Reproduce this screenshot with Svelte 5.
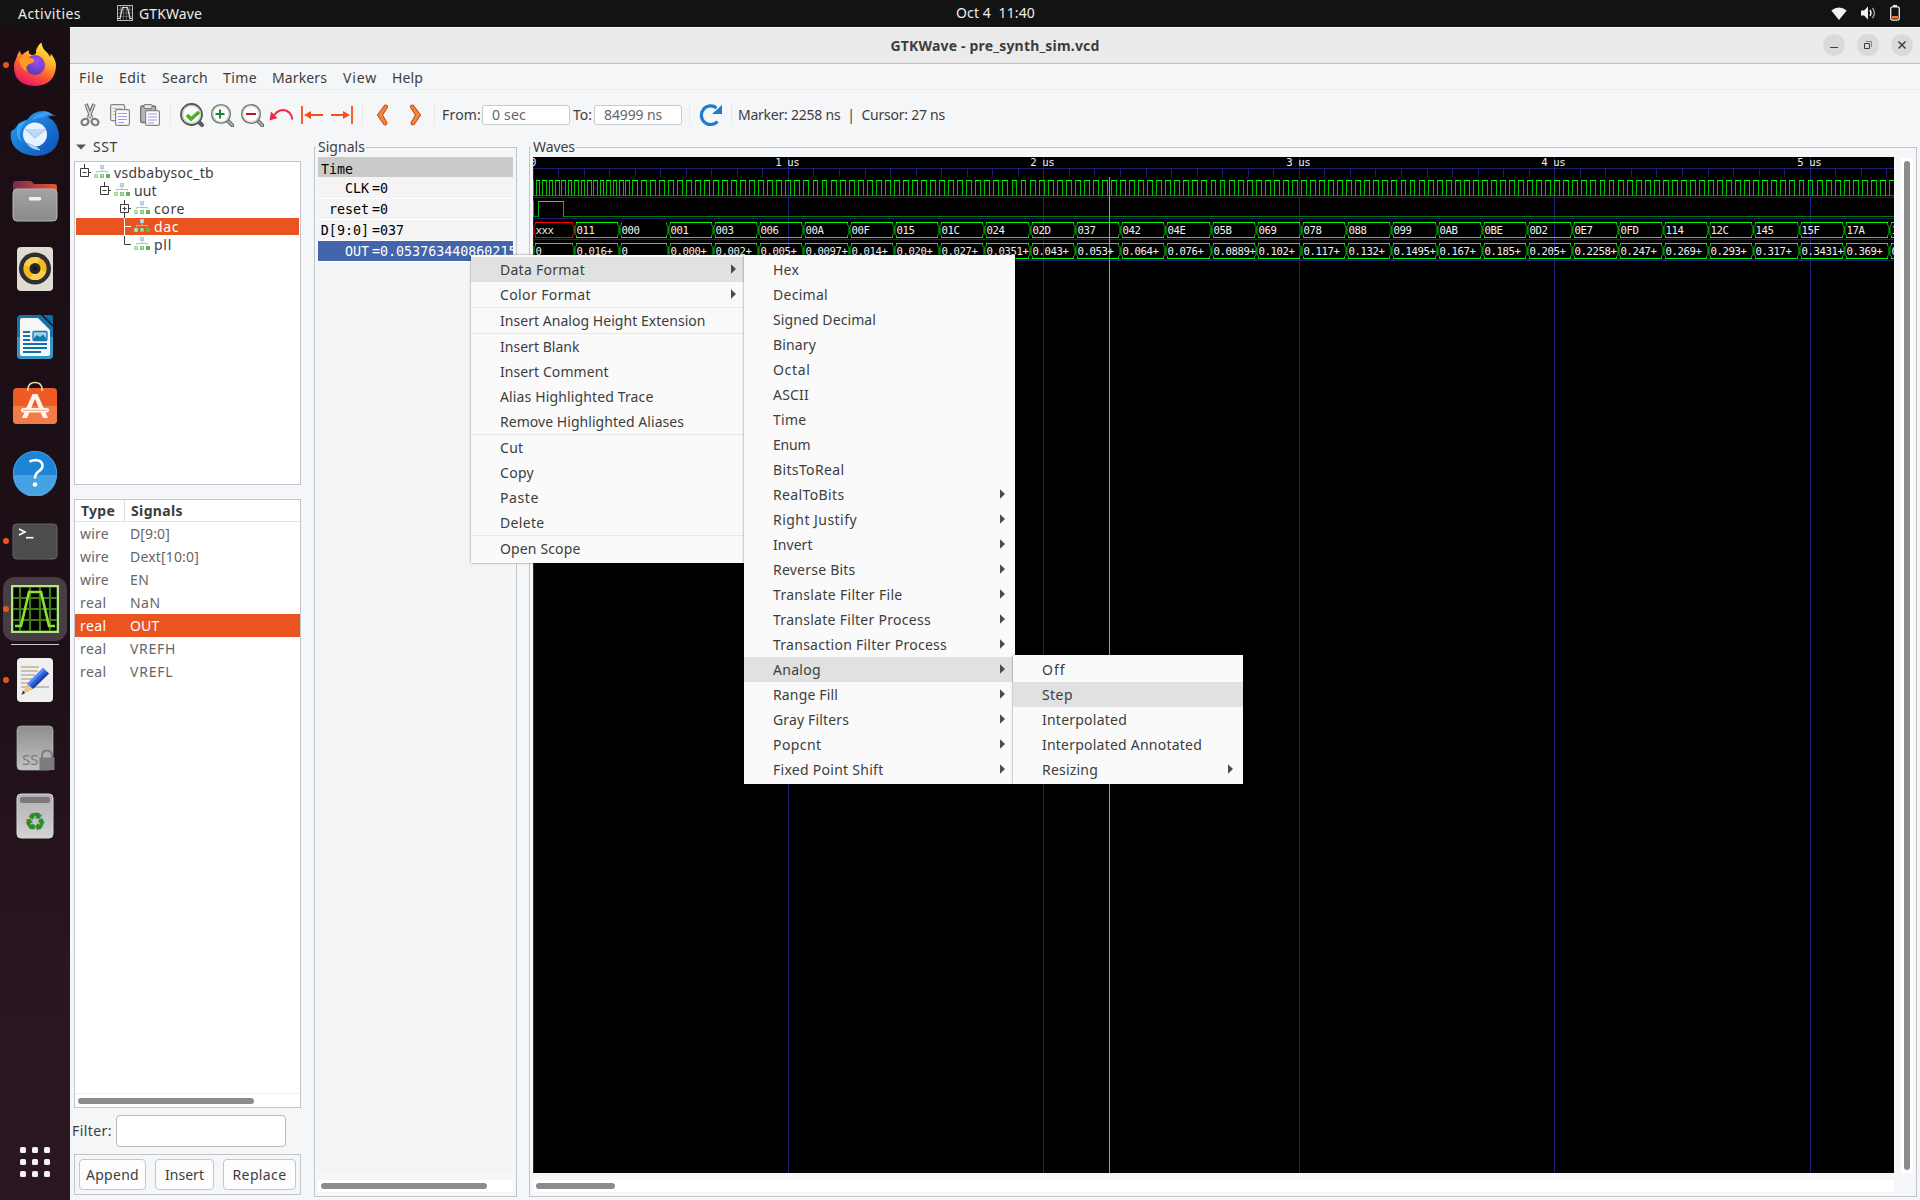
<script>
  // Spreads or tightens the tracking of a label so that it takes the given width.
  function fit(node, width) {
    if (!width) return;
    const n = node.textContent.length;
    const w = node.getBoundingClientRect().width;
    node.style.letterSpacing = `${(width - w) / n}px`;
  }

  const mainMenu = [['File', 25, 40], ['Edit', 27, 43], ['Search', 46, 61], ['Time', 34, 49], ['Markers', 55, 71], ['View', 34, 49], ['Help', 31, 50]];

  const contextMenu = [
    { t: 'Data Format', w: 85, sub: true, on: true }, { t: 'Color Format', w: 91, sub: true }, null,
    { t: 'Insert Analog Height Extension', w: 205.5 }, null,
    { t: 'Insert Blank', w: 79.5 }, { t: 'Insert Comment', w: 108.5 }, { t: 'Alias Highlighted Trace', w: 153.5 }, { t: 'Remove Highlighted Aliases', w: 184 }, null,
    { t: 'Cut', w: 23.5 }, { t: 'Copy', w: 34 }, { t: 'Paste', w: 39 }, { t: 'Delete', w: 44.5 }, null,
    { t: 'Open Scope', w: 80.5 }
  ];
  const formatMenu = [
    { t: 'Hex', w: 26 }, { t: 'Decimal', w: 55 }, { t: 'Signed Decimal', w: 103 }, { t: 'Binary', w: 43 }, { t: 'Octal', w: 37.5 },
    { t: 'ASCII', w: 36 }, { t: 'Time', w: 33.5 }, { t: 'Enum', w: 37.5 }, { t: 'BitsToReal', w: 71.5 },
    { t: 'RealToBits', w: 71.5, sub: true }, { t: 'Right Justify', w: 84, sub: true }, { t: 'Invert', w: 39.5, sub: true },
    { t: 'Reverse Bits', w: 82.5, sub: true }, { t: 'Translate Filter File', w: 129.5, sub: true }, { t: 'Translate Filter Process', w: 158, sub: true },
    { t: 'Transaction Filter Process', w: 174, sub: true }, { t: 'Analog', w: 48, sub: true, on: true }, { t: 'Range Fill', w: 65, sub: true },
    { t: 'Gray Filters', w: 76, sub: true }, { t: 'Popcnt', w: 48.5, sub: true }, { t: 'Fixed Point Shift', w: 110.5, sub: true }
  ];
  const analogMenu = [
    { t: 'Off', w: 23.5 }, { t: 'Step', w: 31, on: true }, { t: 'Interpolated', w: 85 }, { t: 'Interpolated Annotated', w: 160 }, { t: 'Resizing', w: 56, sub: true }
  ];

  const tree = [
    { name: 'vsdbabysoc_tb', depth: 0, box: '-', w: 100 },
    { name: 'uut', depth: 1, box: '-', w: 22.5 },
    { name: 'core', depth: 2, box: '+', w: 31 },
    { name: 'dac', depth: 2, on: true, w: 25 },
    { name: 'pll', depth: 2, last: true, w: 18 }
  ];
  const signals = [['wire', 'D[9:0]', 40], ['wire', 'Dext[10:0]', 69], ['wire', 'EN', 19.5], ['real', 'NaN', 30.5], ['real', 'OUT', 29.5, true], ['real', 'VREFH', 46], ['real', 'VREFL', 43.5]];
  const traces = [['CLK', '0'], ['reset', '0'], ['D[9:0]', '037'], ['OUT', '0.053763440860215', true]];

  // Waveform geometry, in canvas pixels.
  const W = 1361, H = 1016;
  const US = 255.45;
  const snap = (v) => Math.round(v - 0.5) + 0.5;
  const grid = (v) => Math.floor(v) + 0.5;
  const majors = [0, 1, 2, 3, 4, 5].map((i) => grid(i * US));
  const ticks = Array.from({ length: 54 }, (_, i) => grid((i * US) / 10));

  const pulses = [];
  for (let i = 0; i < 15; i++) pulses.push([snap(3.2 + i * 6.4), snap(3.2 + i * 6.4 + 3.6)]);
  for (let i = 0; i < 140; i++) pulses.push([snap(99.1 + i * 9.046), snap(99.1 + i * 9.046 + 4.9)]);
  const clkEdges = 'M0.5 23.5V39' + pulses.map(([a, b]) => `M${a} 39V23.5M${b} 23.5V39`).join('');
  const clkHigh = pulses.map(([a, b]) => `M${a - 0.5} 23.5H${b + 0.5}`).join('');

  const dVals = 'xxx 011 000 001 003 006 00A 00F 015 01C 024 02D 037 042 04E 05B 069 078 088 099 0AB 0BE 0D2 0E7 0FD 114 12C 145 15F 17A 196'.split(' ');
  const oVals = '0 0.016+ 0 0.000+ 0.002+ 0.005+ 0.0097+ 0.014+ 0.020+ 0.027+ 0.0351+ 0.043+ 0.053+ 0.064+ 0.076+ 0.0889+ 0.102+ 0.117+ 0.132+ 0.1495+ 0.167+ 0.185+ 0.205+ 0.2258+ 0.247+ 0.269+ 0.293+ 0.317+ 0.3431+ 0.369+ 0.397+'.split(' ');
  const bounds = [0.5, 41.3, 86.3];
  for (let i = 0; i < 29; i++) bounds.push(135.3 + i * 45.23);
  const cell = (i, top, openTop) => {
    const a = snap(bounds[i]), b = snap(bounds[i + 1]), bot = top + 15;
    const ends = `M${a + 2} ${top}V${top + 2}L${a + 0.5} ${top + 4}V${bot - 4}L${a + 2} ${bot - 2}V${bot}M${b - 2} ${top}V${top + 2}L${b - 0.5} ${top + 4}V${bot - 4}L${b - 2} ${bot - 2}V${bot}`;
    return { ends, lines: `${openTop ? '' : `M${a + 1.5} ${top}H${b - 1.5}`}M${a + 1.5} ${bot}H${b - 1.5}`, x: a + 2 };
  };
  const dCells = dVals.map((v, i) => ({ v, bad: v === 'xxx', ...cell(i, 65.5, v === '000') }));
  const oCells = oVals.map((v, i) => ({ v, ...cell(i, 86.5, false) }));
</script>

{#snippet menu(items)}
  {#each items as it}
    {#if it}
      <div class="item" class:on={it.on}>
        <span use:fit={it.w}>{it.t}</span>
        {#if it.sub}<svg class="arrow" width="5" height="10" viewBox="0 0 5 10"><path d="M0 0.3L5 5L0 9.7Z" fill="#4c4c4c" /></svg>{/if}
      </div>
    {:else}
      <div class="rule"></div>
    {/if}
  {/each}
{/snippet}

{#snippet lens()}
  <path d="M17 17L23 23" stroke="#6d6f6b" stroke-width="4" stroke-linecap="round" />
  <path d="M17.5 17.5L22.5 22.5" stroke="#b9bbb6" stroke-width="1.5" stroke-linecap="round" />
  <circle cx="11" cy="11" r="9.3" fill="#fcfcfa" stroke="#777974" stroke-width="1.6" />
  <circle cx="11" cy="11" r="7.9" fill="none" stroke="#d8dad4" stroke-width="1.2" />
{/snippet}

<div class="desktop">
  <header class="topbar">
    <span class="act"><span use:fit={63}>Activities</span></span>
    <svg class="appicon" width="16" height="16" viewBox="0 0 16 16">
      <rect x="0.5" y="0.5" width="15" height="15" fill="#1a1a1a" stroke="#b8b8b8" />
      <path d="M3.5 1V15M6.5 1V15M9.5 1V15M12.5 1V15M1 4.5H15M1 8H15M1 11.5H15" stroke="#666" stroke-width="0.8" />
      <path d="M1 13.5H3L5.5 2.5H10.5L13 13.5H15" fill="none" stroke="#ddd" stroke-width="1.2" />
    </svg>
    <span use:fit={63}>GTKWave</span>
    <span class="clock"><span use:fit={79}>Oct 4&nbsp; 11:40</span></span>
    <div class="tray">
      <svg width="16" height="13" viewBox="0 0 16 13"><path d="M8 13L0.3 3.6Q8 -2.8 15.7 3.6Z" fill="#f2f2f2" /></svg>
      <svg width="15" height="14" viewBox="0 0 15 14"><path d="M0 4.5H3L7 0.5V13.5L3 9.5H0Z" fill="#f2f2f2" /><path d="M9 4Q11 7 9 10" fill="none" stroke="#eee" stroke-width="1.4" /><path d="M11.5 1.8Q15.2 7 11.5 12.2" fill="none" stroke="#aaa" stroke-width="1.3" /></svg>
      <svg width="10" height="16" viewBox="0 0 10 16"><path d="M3 0H7V2H3Z" fill="#eee" /><rect x="0.7" y="1.9" width="8.6" height="13.2" rx="1.8" fill="none" stroke="#eee" stroke-width="1.3" /><rect x="2" y="11" width="6" height="2.6" fill="#f37329" /></svg>
    </div>
  </header>

  <div class="under">
    <nav class="dock">
      <div class="slot run">
        <svg width="48" height="48" viewBox="0 0 48 48">
          <defs>
            <linearGradient id="ff" x1="0.8" y1="0" x2="0.3" y2="1"><stop offset="0" stop-color="#fff04a" /><stop offset="0.35" stop-color="#ffb52a" /><stop offset="0.65" stop-color="#ff5a36" /><stop offset="1" stop-color="#e8126a" /></linearGradient>
            <radialGradient id="ffc" cx="0.6" cy="0.3" r="0.8"><stop offset="0" stop-color="#a04df0" /><stop offset="1" stop-color="#4e3bb0" /></radialGradient>
          </defs>
          <path d="M5 18Q6 13 9 9.500Q9 13 11 14Q15 10 18 9.500Q17 13 21 14Q26 14 25 10Q26 5 30.500 1.500Q31 7 35 10.500Q38 13 39 16Q40 14 39.500 12.500Q45 18 45 25Q44 44 24 45Q3 44 3 26Q3 21 5 18Z" fill="url(#ff)" />
          <circle cx="24" cy="24" r="10" fill="url(#ffc)" />
          <path d="M8 18Q14 14 23 18Q24 22 18 23Q13 26 17 31Q9 28 8 18Z" fill="#ff9a25" />
        </svg>
      </div>
      <div class="slot">
        <svg width="50" height="48" viewBox="0 0 50 48">
          <defs><linearGradient id="tb" x1="0" y1="0" x2="1" y2="1"><stop offset="0" stop-color="#2aa0f2" /><stop offset="1" stop-color="#0b4fb4" /></linearGradient></defs>
          <path d="M2 21Q4 22 6 18Q10 12 17 11Q23 1 36 2L46 7Q41 6 38 8Q49 14 49 28Q47 46 26 47Q4 45 1 30Q0 24 2 21Z" fill="url(#tb)" />
          <path d="M21 11Q27 2 38 3L43 6Q37 5 34 8Z" fill="#3f9bf0" />
          <path d="M8 15Q4 27 12 34Q6 22 17 11Z" fill="#3aa6f5" />
          <circle cx="25" cy="25.500" r="12" fill="#e6f2fd" />
          <path d="M15 20L25 29L36 20M24 37Q27 38 30 41Q20 40 17 34Z" fill="#b9dafa" stroke="#98bfea" />
        </svg>
      </div>
      <div class="slot">
        <svg width="46" height="42" viewBox="0 0 46 42">
          <defs><linearGradient id="fl" x1="0" x2="1"><stop offset="0" stop-color="#7c2b52" /><stop offset="1" stop-color="#e8562a" /></linearGradient><linearGradient id="fg" x1="0" y1="0" x2="0" y2="1"><stop offset="0" stop-color="#a3a3a3" /><stop offset="1" stop-color="#8a8a8a" /></linearGradient></defs>
          <path d="M1 4Q1 1 4 1H18Q20 1 22 4H42Q45 4 45 7V20H1Z" fill="url(#fl)" />
          <rect x="1" y="9" width="44" height="32" rx="4" fill="url(#fg)" stroke="#b6b6b6" />
          <rect x="17" y="17" width="12" height="3.500" rx="1" fill="#f3f3f3" />
        </svg>
      </div>
      <div class="slot">
        <svg width="38" height="46" viewBox="0 0 38 46">
          <rect x="1" y="1" width="36" height="44" rx="4" fill="#dfdcd2" /><circle cx="19" cy="22.500" r="16" fill="#2f2e36" /><circle cx="19" cy="22.500" r="11.600" fill="#f2b91f" /><path d="M8 19A11.600 11.600 0 0 1 24 12L19 22ZM30 26A11.600 11.600 0 0 1 14 33L19 22Z" fill="#fbd65b" opacity="0.8" /><circle cx="19" cy="22.500" r="5.500" fill="#28272e" /><circle cx="19" cy="22.500" r="2" fill="#111" />
        </svg>
      </div>
      <div class="slot">
        <svg width="38" height="46" viewBox="0 0 38 46">
          <path d="M5 1H25L37 13V41Q37 45 33 45H5Q1 45 1 41V5Q1 1 5 1Z" fill="#1174aa" /><path d="M1 23H37V41Q37 45 33 45H5Q1 45 1 41Z" fill="#3796c8" /><path d="M27 1H35Q37 1 37 3V11Z" fill="#0f6ba0" />
          <path d="M6 4H22L34 16V40Q34 42 32 42H6Q4 42 4 40V6Q4 4 6 4Z" fill="#f6f6f6" />
          <path d="M7 18H14M7 22H14M7 26H14M7 30H31M7 34H31M7 38H25" stroke="#0d72ad" stroke-width="1.800" /><rect x="17" y="17.500" width="14" height="9" rx="1" fill="#a6d1ea" stroke="#1579b1" stroke-width="1.300" /><path d="M18 26V24L21 21L24 23L27 20.500L30 24V26Z" fill="#1579b1" />
        </svg>
      </div>
      <div class="slot bag">
        <svg width="46" height="48" viewBox="0 0 46 48">
          <rect x="1" y="9" width="44" height="36" rx="4" fill="#ef5b25" /><path d="M1 27H45V41Q45 45 41 45H5Q1 45 1 41Z" fill="#f27c47" />
          <path d="M16 12V9Q17 3.500 23 3.500Q29 3.500 30 9V12" fill="none" stroke="#f5d9a8" stroke-width="1.600" />
          <path d="M20.500 15H25.500L36 39H31L23 20L15 39H10Z" fill="#fff3ea" /><rect x="9" y="29" width="28" height="4.500" rx="2.200" fill="#fff3ea" /><path d="M11 31.300H35" stroke="#f08a60" stroke-width="0.700" />
        </svg>
      </div>
      <div class="slot">
        <svg width="46" height="46" viewBox="0 0 46 46">
          <circle cx="23" cy="23" r="22" fill="#1d84d8" /><path d="M1 25H45A22 22 0 0 1 1 25Z" fill="#45a2e2" /><circle cx="23" cy="23" r="21.700" fill="none" stroke="#5ea9e0" stroke-width="0.700" />
          <path d="M17.500 11.500Q21 10 24 10Q30.500 10.500 30.500 16Q30.500 19 26.500 21.500Q23 24 23 28.500" fill="none" stroke="#fff" stroke-width="2.600" /><circle cx="23" cy="34.500" r="2.300" fill="#fff" />
        </svg>
      </div>
      <div class="slot run term">
        <svg width="46" height="38" viewBox="0 0 46 38">
          <rect x="1" y="1" width="44" height="35" rx="3.500" fill="#4c4c4c" stroke="#656565" /><path d="M7 6L13 9L7 12" fill="none" stroke="#fff" stroke-width="1.600" /><path d="M14 14.700H21.500" stroke="#fff" stroke-width="1.600" />
        </svg>
      </div>
      <div class="slot run active">
        <svg width="48" height="48" viewBox="0 0 48 48">
          <rect x="1" y="1" width="46" height="46" fill="#000" stroke="#aee87f" stroke-width="2.600" />
          <path d="M9 2V46M19 2V46M29 2V46M39 2V46M2 13H46M2 24H46M2 35H46" stroke="#417a1b" stroke-width="2.200" />
          <path d="M4 41H10L18 7H30L38 41H44" fill="none" stroke="#8ae234" stroke-width="2.600" />
        </svg>
      </div>
      <div class="dockrule"></div>
      <div class="slot run">
        <svg width="38" height="46" viewBox="0 0 38 46">
          <rect x="1" y="1" width="36" height="44" rx="4" fill="#efefed" />
          <path d="M5 10H23M5 14H22M5 18H19M5 22H18M5 26H15M5 30H33" stroke="#c5c2b4" stroke-width="1.800" />
          <path d="M27 11L33 16.500L17 32L11 27Z" fill="#2b60dc" /><path d="M27 11L29 13L13 28.500L11 27Z" fill="#5a8cf2" /><path d="M31 15L33 16.500L17 32L15 30.500Z" fill="#1f45ad" /><path d="M11 27L17 32L5.500 38Z" fill="#f4bf86" /><path d="M7 33.500L9 36L5.500 38Z" fill="#333" />
        </svg>
      </div>
      <div class="slot">
        <svg width="40" height="46" viewBox="0 0 40 46">
          <defs><linearGradient id="sd" x1="0" y1="0" x2="0" y2="1"><stop offset="0" stop-color="#8f8f8f" /><stop offset="1" stop-color="#c3c3c3" /></linearGradient></defs>
          <rect x="2" y="1" width="36" height="44" rx="4" fill="url(#sd)" stroke="#b4b4b4" stroke-width="0.700" />
          <text x="7" y="39.500" class="ssd">SS</text>
          <path d="M27 33V30Q27.500 25.500 32 25.500Q36.500 25.500 37 30V33" fill="none" stroke="#7c7c7c" stroke-width="2" /><rect x="24.500" y="32.500" width="15" height="12.500" fill="#7c7c7c" />
        </svg>
      </div>
      <div class="slot">
        <svg width="38" height="46" viewBox="0 0 38 46">
          <defs><linearGradient id="tr" x1="0" y1="0" x2="0" y2="1"><stop offset="0" stop-color="#b2b2b2" /><stop offset="1" stop-color="#d2d2d2" /></linearGradient></defs>
          <rect x="1" y="1" width="36" height="44" rx="4" fill="url(#tr)" stroke="#d8d8d8" /><rect x="4" y="4" width="30" height="6" rx="2" fill="#7a7a7a" />
          <text x="19" y="37" text-anchor="middle" class="recycle">♻</text>
        </svg>
      </div>
      <div class="grid9">{#each Array(9) as _}<i></i>{/each}</div>
    </nav>

    <main class="window">
      <div class="titlebar">
        <b use:fit={209}>GTKWave - pre_synth_sim.vcd</b>
        <div class="winbtns">
          <svg width="22" height="22" viewBox="0 0 22 22"><circle cx="11" cy="11" r="11" fill="#dadada" /><path d="M7 13.500H15" stroke="#3d3d3d" /></svg>
          <svg width="22" height="22" viewBox="0 0 22 22"><circle cx="11" cy="11" r="11" fill="#dadada" /><path d="M7.500 9.500H12.500V14.500H7.500Z" fill="none" stroke="#3d3d3d" /><path d="M9 7.500H14.500V13" fill="none" stroke="#888" /></svg>
          <svg width="22" height="22" viewBox="0 0 22 22"><circle cx="11" cy="11" r="11" fill="#dadada" /><path d="M7.500 7.500L14.500 14.500M14.500 7.500L7.500 14.500" stroke="#3d3d3d" stroke-width="1.500" /></svg>
        </div>
      </div>

      <div class="menubar">
        {#each mainMenu as [label, w, step]}<span style:width="{step}px"><span use:fit={w}>{label}</span></span>{/each}
      </div>

      <div class="toolbar">
        <svg class="cut" width="20" height="24" viewBox="0 0 20 24">
          <path d="M6 1L11.500 15M14 1L8.500 15" stroke="#747671" stroke-width="3.600" /><path d="M6 1.500L11.500 15M14 1.500L8.500 15" stroke="#d3d5d0" stroke-width="1.400" />
          <ellipse cx="5" cy="19" rx="3.600" ry="3" fill="#f5f6f8" stroke="#7b7d78" stroke-width="2.200" transform="rotate(-30 5 19)" /><ellipse cx="15" cy="19" rx="3.600" ry="3" fill="#f5f6f8" stroke="#7b7d78" stroke-width="2.200" transform="rotate(30 15 19)" />
        </svg>
        <svg class="copy" width="20" height="22" viewBox="0 0 20 22">
          <rect x="0.600" y="0.600" width="14" height="16" rx="1.500" fill="#f1f1ef" stroke="#858782" stroke-width="1.200" /><path d="M3 4.500H12M3 7.500H6M3 10.500H6" stroke="#bbb" />
          <rect x="5.600" y="5.600" width="13.800" height="15.800" rx="1.500" fill="#fcfcfb" stroke="#858782" stroke-width="1.200" /><path d="M8 9.500H17M8 12.500H17M8 15.500H17M8 18.500H14" stroke="#9c9cee" />
        </svg>
        <svg class="paste" width="20" height="22" viewBox="0 0 20 22">
          <rect x="0.600" y="2" width="15" height="16.500" rx="1.500" fill="#b5b7b2" stroke="#70726d" stroke-width="1.300" /><rect x="4" y="0.600" width="8" height="4" rx="1" fill="#e8e8e6" stroke="#70726d" />
          <rect x="5.600" y="6.600" width="13.800" height="14.800" rx="1.500" fill="#fcfcfb" stroke="#858782" stroke-width="1.200" /><path d="M8 10H17M8 13H17M8 16H17M8 19H14" stroke="#9c9cee" />
        </svg>
        <i class="sep s1"></i>
        <svg class="z1" width="24" height="24" viewBox="0 0 24 24"><path d="M18 18L22 22" stroke="#5c5e5a" stroke-width="4" stroke-linecap="round" /><circle cx="11.500" cy="11.500" r="10.500" fill="#fbfbf9" stroke="#555753" stroke-width="1.800" /><circle cx="11.500" cy="11.500" r="8.900" fill="none" stroke="#c9cbc5" stroke-width="1.300" /><path d="M7 12L11 16L19 9" fill="none" stroke="#4caf22" stroke-width="3.600" /></svg>
        <svg class="z2" width="24" height="24" viewBox="0 0 24 24">{@render lens()}<path d="M5.500 11H14.500M10 6.500V15.500" stroke="#148a2b" stroke-width="2" /></svg>
        <svg class="z3" width="24" height="24" viewBox="0 0 24 24">{@render lens()}<path d="M6 11H16" stroke="#c0142c" stroke-width="2" /></svg>
        <svg class="undo" width="25" height="14" viewBox="0 0 25 14"><path d="M4 9Q8 2 14 2Q22 2.500 23.500 11.500" fill="none" stroke="#f5274d" stroke-width="1.900" /><path d="M0.500 12.500L2 3.500L8.500 10Z" fill="#f5274d" /></svg>
        <svg class="toleft" width="22" height="18" viewBox="0 0 22 18"><path d="M1 0V18M22 9H6" stroke="#f4511a" stroke-width="1.800" /><path d="M3 9L10 5V13Z" fill="#f4511a" /></svg>
        <svg class="toright" width="22" height="18" viewBox="0 0 22 18"><path d="M21 0V18M0 9H16" stroke="#f4511a" stroke-width="1.800" /><path d="M19 9L12 5V13Z" fill="#f4511a" /></svg>
        <i class="sep s2"></i>
        <svg class="prev" width="13" height="22" viewBox="0 0 13 22"><path d="M9 1L1.500 11L8 20.500Q10 21.500 11 19L6.500 11L11.500 3Q11.500 1 9 1Z" fill="#f08a3c" stroke="#d2501c" stroke-width="1.200" /></svg>
        <svg class="next" width="13" height="22" viewBox="0 0 13 22"><path d="M4 1L11.500 11L5 20.500Q3 21.500 2 19L6.500 11L1.500 3Q1.500 1 4 1Z" fill="#f08a3c" stroke="#d2501c" stroke-width="1.200" /></svg>
        <i class="sep s3"></i>
        <span class="from"><span use:fit={39}>From:</span></span>
        <div class="entry"><span use:fit={34}>0 sec</span></div>
        <span class="to"><span use:fit={19}>To:</span></span>
        <div class="entry"><span use:fit={58}>84999 ns</span></div>
        <i class="sep s4"></i>
        <svg class="reload" width="24" height="24" viewBox="0 0 24 24"><path d="M18.500 18.500A9.300 9.300 0 1 1 17.500 5" fill="none" stroke="#1f7bd2" stroke-width="3.200" /><path d="M23 2V11H13Z" fill="#1f7bd2" /></svg>
        <i class="sep s5"></i>
        <span use:fit={207}>Marker: 2258 ns&nbsp; |&nbsp; Cursor: 27 ns</span>
      </div>

      <div class="body">
        <section class="side">
          <div class="sst"><svg width="10" height="6" viewBox="0 0 10 6"><path d="M0 0.500H10L5 5.500Z" fill="#555" /></svg><span use:fit={25}>SST</span></div>
          <div class="tree">
            {#each tree as r}
              <div class="node" class:on={r.on} style:padding-left="{4 + r.depth * 20}px">
                <svg width="14" height="18" viewBox="0 0 14 18">
                  {#if r.box}
                    <path d="M4.500 0V4.500M8.500 8.500H11M0.500 4.500H8.500V12.500H0.500ZM2.500 8.500H6.500" fill="none" stroke="#3a3a3a" />
                    {#if r.box === '+'}<path d="M4.500 6.500V10.500M4.500 12.500V18" stroke="#3a3a3a" />{/if}
                  {:else}
                    <path d={r.last ? 'M4.5 0V8.5H11' : 'M4.5 0V18M4.5 8.5H11'} fill="none" stroke={r.on ? '#fff' : '#3a3a3a'} />
                  {/if}
                </svg>
                <svg class="hier" width="16" height="14" viewBox="0 0 16 14">
                  <path d="M8 5V7.500M2.500 9V7.500H13.500V9" fill="none" stroke="#babcb8" />
                  <rect x="6" y="1" width="4" height="4" fill="#a9cbee" />
                  <rect x="0" y="10" width="4" height="4" fill="#a5d69a" /><rect x="6" y="10" width="4" height="4" fill="#83c776" /><rect x="12" y="10" width="4" height="4" fill="#5fb353" />
                  <path d="M7 2H9V3.500H7ZM1 11H3V12.500H1ZM7 11H9V12.500H7Z" fill="#d9ecf5" opacity="0.7" />
                </svg>
                <span use:fit={r.w}>{r.name}</span>
              </div>
            {/each}
          </div>
          <div class="list">
            <div class="lhead"><b class="c1"><span use:fit={34}>Type</span></b><b class="c2"><span use:fit={52}>Signals</span></b></div>
            {#each signals as [type, name, w, on]}
              <div class="lrow" class:on={on}><span class="c1"><span use:fit={type === 'wire' ? 29 : 26.5}>{type}</span></span><span class="c2"><span use:fit={w}>{name}</span></span></div>
            {/each}
            <div class="lfoot"><i></i></div>
          </div>
          <div class="filter"><span class="flabel"><span use:fit={40}>Filter:</span></span><div class="fin"></div></div>
          <div class="btns">
            <div class="btn b1"><span use:fit={53}>Append</span></div>
            <div class="btn b2"><span use:fit={39}>Insert</span></div>
            <div class="btn b3"><span use:fit={54}>Replace</span></div>
          </div>
        </section>

        <section class="frame sigs">
          <span class="legend"><span use:fit={47}>Signals</span></span>
          <div class="names">
            <div class="thead">Time</div>
            {#each traces as [n, v, on]}<div class="trace" class:on={on}><span class="n">{n}</span><span>={v}</span></div>{/each}
          </div>
          <div class="trough"><i class="th1"></i></div>
        </section>

        <section class="frame waves">
          <span class="legend"><span use:fit={42}>Waves</span></span>
          <div class="wrow">
            <svg class="canvas" width={W} height={H} viewBox="0 0 {W} {H}">
              <rect width={W} height={H} fill="#000" />
              <path d={majors.map((x) => `M${x} 0V${H}`).join('') + ticks.map((x) => `M${x} 12V20`).join('')} stroke="#202072" />
              <path d="M0 11.500H1361M0 40.500H1361M0 61.500H1361M0 82.500H1361M0 103.500H1361" stroke="#202072" />
              <path d="M0 38.500H1361" stroke="#008000" />
              <path d={clkEdges} stroke="#00c000" />
              <path d={clkHigh} stroke="#00ff00" />
              <path d="M0 59.500H5M30 59.500H1361" stroke="#008000" />
              <path d="M0.500 44V60M5.500 44V60M30.500 44V60" stroke="#00c000" />
              <path d="M5 44.500H31" stroke="#00ff00" />
              {#each [...dCells, ...oCells] as c}
                <path d={c.ends} fill="none" stroke={c.bad ? '#ff0000' : '#00c000'} />
                <path d={c.lines} stroke={c.bad ? '#ff0000' : '#00ff00'} />
              {/each}
              <path d="M576.500 20V{H}" stroke="#e87878" />
              {#each dCells as c}<text x={c.x} y="77">{c.v}</text>{/each}
              {#each oCells as c}<text x={c.x} y="98">{c.v}</text>{/each}
              <text x="-3" y="9">0</text>
              {#each majors.slice(1) as x, i}<text x={x - 13.3} y="9" xml:space="preserve">{i + 1} us</text>{/each}
            </svg>
            <div class="vtrough"><i></i></div>
          </div>
          <div class="trough"><i class="th2"></i></div>
        </section>
      </div>
    </main>
  </div>

  <div class="popup p1">{@render menu(contextMenu)}</div>
  <div class="popup p2">{@render menu(formatMenu)}</div>
  <div class="popup p3">{@render menu(analogMenu)}</div>
</div>

<style>
  :global(body) { margin: 0; overflow: hidden; }
  .desktop { position: relative; width: 1920px; height: 1200px; overflow: hidden; display: flex; flex-direction: column; background: #f5f6f8; font-family: "Noto Sans", "Open Sans", sans-serif; font-size: 14px; color: #3d3d3d; white-space: nowrap; }
  .desktop * { box-sizing: border-box; }
  svg { display: block; flex: none; }
  i { display: block; flex: none; }

  .topbar { position: relative; height: 27px; flex: none; background: #131313; color: #ededed; display: flex; align-items: center; padding-left: 18px; padding-bottom: 1px; }
  .act { width: 99px; }
  .appicon { margin-right: 6px; }
  .clock { position: absolute; left: 956px; top: 3px; }
  .tray { margin-left: auto; display: flex; align-items: center; gap: 14px; padding-right: 20px; }

  .under { flex: 1; display: flex; min-height: 0; }
  .dock { width: 70px; flex: none; background: linear-gradient(#1a0d13 0%, #1e1018 55%, #2a1520 80%, #2b1722 100%); padding-top: 4px; display: flex; flex-direction: column; align-items: center; }
  .slot { position: relative; height: 68px; width: 64px; flex: none; display: flex; align-items: center; justify-content: center; }
  .bag { padding-bottom: 5px; }
  .term { padding-top: 2px; }
  .run::before { content: ''; position: absolute; left: 0; top: 31px; width: 6px; height: 6px; border-radius: 3px; background: #e95420; }
  .active { height: 64px; margin: 2px 0; border-radius: 12px; background: #483d43; }
  .active::before { top: 29px; }
  .dockrule { width: 48px; height: 1px; margin: 1px 0; background: #cfcacd; }
  .ssd { font: 15px "Noto Sans", sans-serif; fill: #7c7c7c; }
  .recycle { font: 24px "DejaVu Sans", sans-serif; fill: #2d8a27; stroke: #2d8a27; stroke-width: 0.5px; }
  .grid9 { margin-top: auto; margin-bottom: 23px; display: grid; grid-template-columns: repeat(3, 6px); gap: 6px; }
  .grid9 i { width: 6px; height: 6px; border-radius: 1.500px; background: #f2f2f2; }

  .window { flex: 1; min-width: 0; display: flex; flex-direction: column; }
  .titlebar { position: relative; height: 37px; flex: none; background: #ebebeb; border-top: 1px solid #fafafa; border-bottom: 1px solid #bfbfbf; display: flex; align-items: center; justify-content: center; }
  .winbtns { position: absolute; right: 7px; top: 6px; display: flex; gap: 12px; }
  .menubar { height: 26px; flex: none; border-bottom: 1px solid #ecedf0; padding: 2px 0 0 9px; display: flex; align-items: center; }
  .toolbar { height: 47px; flex: none; display: flex; align-items: center; padding: 2px 0 0 10px; }
  .cut { margin-right: 10px; }
  .copy { margin-right: 10px; }
  .paste { margin-right: 10px; }
  .sep { width: 1px; height: 21px; background: #e8e9ec; }
  .s1 { margin-right: 9px; }
  .z1 { margin-right: 6px; }
  .z2 { margin-right: 6px; }
  .z3 { margin-right: 5px; }
  .undo { margin-right: 7px; }
  .toleft { margin-right: 8px; }
  .toright { margin-right: 9px; }
  .s2 { margin-right: 13px; }
  .prev { margin-right: 20px; }
  .next { margin-right: 12px; }
  .s3 { margin-right: 7px; }
  .from { width: 40px; }
  .to { width: 24px; padding-left: 3px; }
  .entry { width: 88px; height: 20px; border: 1px solid #c6cad3; border-radius: 3px; background: #fff; padding-left: 9px; display: flex; align-items: center; color: #666; }
  .s4 { margin: 0 9px 0 7px; }
  .reload { margin-right: 8px; }
  .s5 { margin-right: 6px; }

  .body { flex: 1; min-height: 0; display: flex; }
  .side { width: 244px; flex: none; padding-left: 4px; display: flex; flex-direction: column; }
  .sst { height: 24px; flex: none; display: flex; align-items: center; gap: 7px; padding: 0 0 5px 2px; }
  .tree { width: 227px; height: 324px; flex: none; background: #fff; border: 1px solid #c1c5ce; padding: 2px 1px; }
  .node { height: 18px; display: flex; align-items: center; line-height: 16px; }
  .node.on { background: linear-gradient(#e95420, #e95420) no-repeat 0 0 / 100% 17px; color: #fff; }
  .hier { margin: -4px 4px 0 0; }
  .list { width: 227px; height: 609px; margin-top: 14px; flex: none; background: #fff; border: 1px solid #c1c5ce; display: flex; flex-direction: column; }
  .lhead { height: 22px; flex: none; display: flex; align-items: center; border-bottom: 1px solid #e3e3e6; }
  .lhead .c1 { width: 50px; line-height: 22px; border-right: 1px solid #dcdce0; padding-left: 6px; }
  .lhead .c2 { padding-left: 6px; line-height: 22px; }
  .lrow { height: 23px; flex: none; display: flex; align-items: center; color: #666; }
  .lrow .c1 { width: 50px; padding-left: 5px; }
  .lrow .c2 { padding-left: 5px; }
  .lrow.on { background: #e95420; color: #fff; }
  .lfoot { margin-top: auto; height: 14px; border-top: 1px solid #eeeff1; padding: 4px 3px 0; }
  .lfoot i { width: 176px; height: 6px; border-radius: 3px; background: #8b8b8b; }
  .filter { height: 32px; margin: 7px 0 7px -2px; flex: none; display: flex; align-items: center; }
  .flabel { width: 44px; padding-bottom: 2px; }
  .fin { width: 170px; height: 32px; border: 1px solid #b9b9b9; border-radius: 4px; background: #fff; }
  .btns { width: 227px; height: 41px; flex: none; border: 1px solid #c1c5ce; padding: 4px; display: flex; }
  .btn { height: 31px; border: 1px solid #c3c6cc; border-radius: 4px; background: #fdfdfd; display: flex; align-items: center; justify-content: center; }
  .b1 { width: 67px; }
  .b2 { width: 59px; margin: 0 9px; }
  .b3 { width: 73px; }

  .frame { position: relative; height: 1050px; margin-top: 10px; border: 1px solid #c1c5ce; padding: 9px 3px 0; flex: none; }
  .legend { position: absolute; left: 1px; top: -11px; padding: 0 1px 0 2px; line-height: 20px; background: #f5f6f8; }
  .sigs { width: 203px; }
  .waves { width: 1388px; margin-left: 12px; }
  .names { width: 195px; height: 1016px; background: #f4f4f4; overflow: hidden; font-family: "DejaVu Sans Mono", monospace; font-size: 13.330px; color: #000; }
  .thead { height: 20px; background: #cacaca; padding: 4px 0 0 3px; line-height: 18px; margin-bottom: 1px; }
  .trace { height: 21px; border-bottom: 1px solid #fff; display: flex; gap: 3px; padding-left: 2px; line-height: 22px; overflow: hidden; }
  .trace.on { background: #4464ac; color: #fff; }
  .n { width: 49px; flex: none; text-align: right; }
  .trough { height: 12px; margin-top: 7px; padding: 3px; background: #fff; }
  .waves .trough { width: 1361px; }
  .trough i { height: 6px; border-radius: 3px; background: #8b8b8b; }
  .th1 { width: 166px; }
  .th2 { width: 79px; }
  .wrow { display: flex; gap: 7px; }
  .canvas text { font-family: "DejaVu Sans Mono", monospace; font-size: 10.670px; letter-spacing: -0.420px; fill: #f0f0f0; }
  .vtrough { width: 12px; height: 1015px; margin-top: 1px; padding: 3px; background: #fff; }
  .vtrough i { width: 6px; height: 1009px; border-radius: 3px; background: #8b8b8b; }

  .popup { position: absolute; background: #fafafa; padding: 2px 0; box-shadow: 0 0 2px rgba(0, 0, 0, 0.5); }
  .p1 { left: 471px; top: 255px; width: 273px; }
  .p2 { left: 744px; top: 255px; width: 271px; }
  .p3 { left: 1013px; top: 655px; width: 230px; }
  .item { height: 25px; display: flex; align-items: center; justify-content: space-between; padding: 0 8px 0 29px; }
  .p2 .item, .p3 .item { padding-right: 10px; }
  .item.on { background: #e1e1e1; }
  .arrow { margin-top: -2px; }
  .rule { height: 1px; background: #e9e9e9; }
</style>
